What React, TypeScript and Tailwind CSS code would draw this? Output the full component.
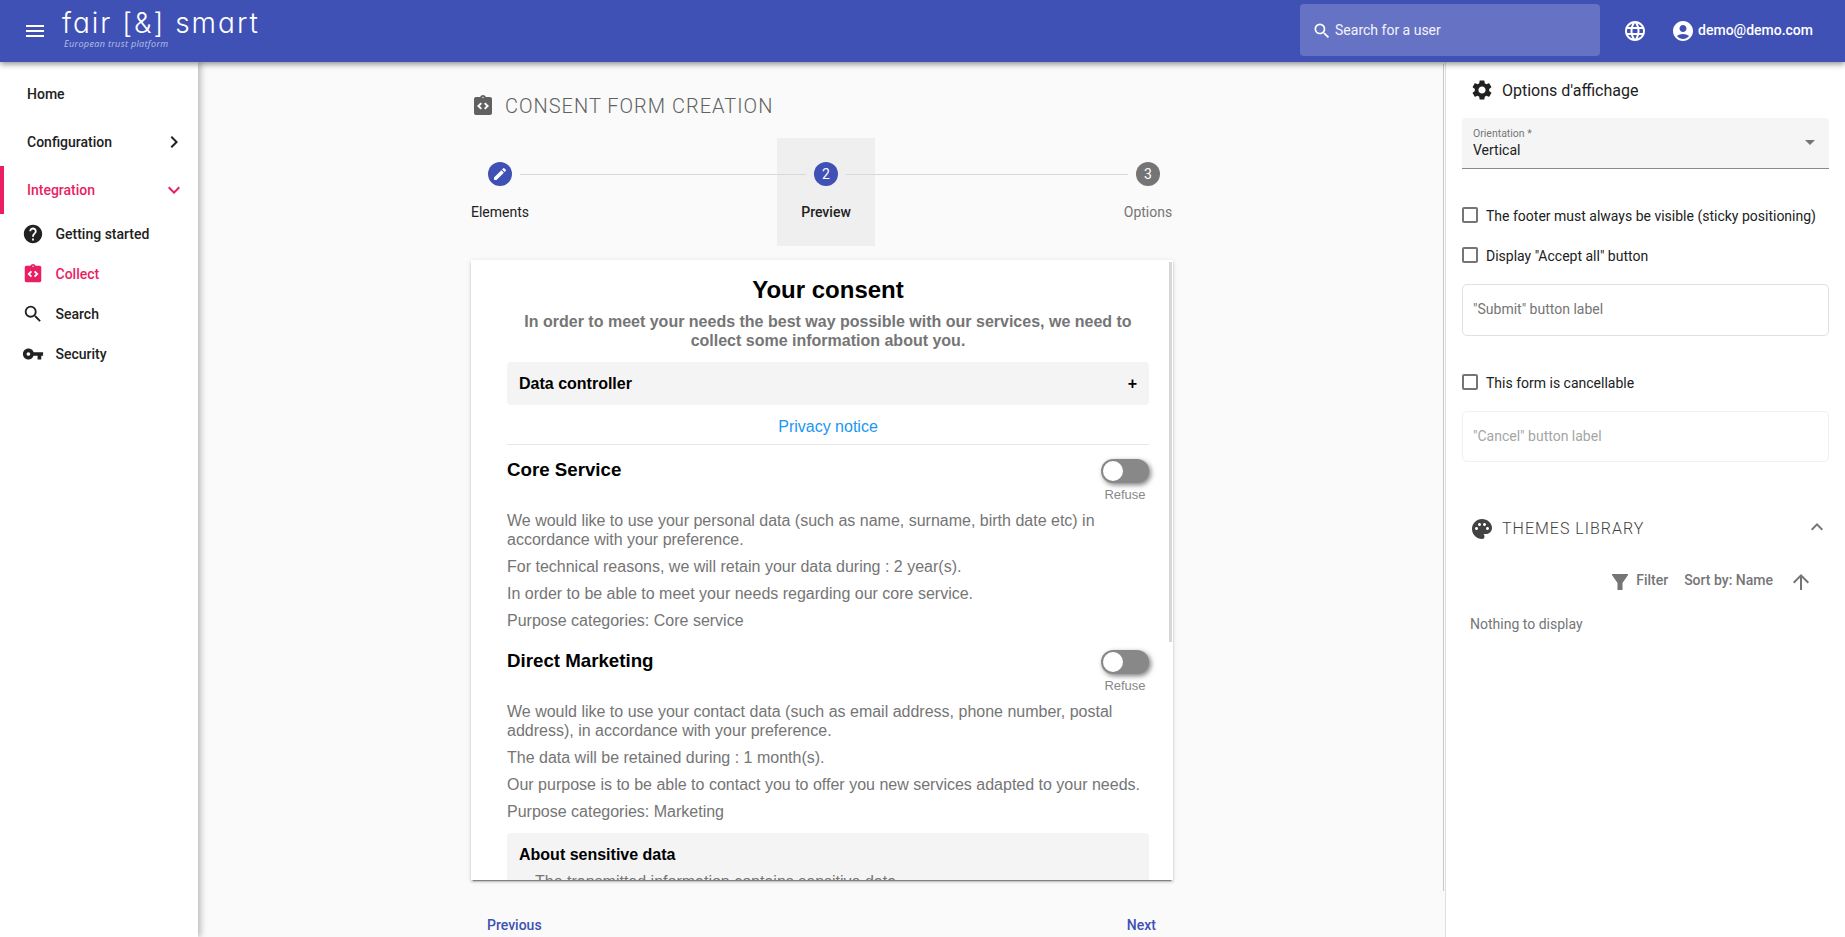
import type { ReactNode } from "react";
import {
  MdMenu, MdHelp, MdIntegrationInstructions, MdSearch, MdVpnKey, MdLanguage, MdAccountCircle,
  MdSettings, MdPalette, MdCreate, MdArrowUpward, MdChevronRight, MdExpandMore, MdExpandLess,
} from "react-icons/md";

function NavItem({ label, active, icon }: { label: string; active?: boolean; icon?: ReactNode }) {
  return (
    <div className={`flex h-12 items-center justify-between border-l-4 pr-3 pl-[23px] ${active ? "border-[#e91e63] text-[#e91e63]" : "border-transparent"}`}>
      <span>{label}</span>
      {icon}
    </div>
  );
}

function SubItem({ label, active, icon }: { label: string; active?: boolean; icon: ReactNode }) {
  return (
    <div className={`flex h-10 items-center pl-[22px] ${active ? "text-[#e91e63]" : ""}`}>
      <span className="w-[33.5px]">{icon}</span>
      <span>{label}</span>
    </div>
  );
}

function Toggle() {
  return (
    <div className="flex w-12 shrink-0 flex-col items-center">
      <div className="flex h-6 w-12 items-center rounded-full bg-[#888] pl-0.5 shadow-[2px_2px_5px_rgba(0,0,0,0.5)]">
        <div className="h-5 w-5 rounded-full bg-white" />
      </div>
      <span className="mt-1 text-[13px] leading-[15px] text-[#888]">Refuse</span>
    </div>
  );
}

function Purpose({ title, lines }: { title: string; lines: string[] }) {
  return (
    <section>
      <div className="flex h-11 items-start justify-between">
        <h3 className="text-[18.72px] leading-[22px] font-bold text-black">{title}</h3>
        <Toggle />
      </div>
      <div className="mt-2 flex flex-col gap-2">
        {lines.map((l) => <p key={l}>{l}</p>)}
      </div>
    </section>
  );
}

function Check({ label }: { label: string }) {
  return (
    <div className="flex h-10 items-center">
      <span className="mr-2 h-4 w-4 rounded-[2px] border-2 border-[#757575]" />
      <span className="pt-px">{label}</span>
    </div>
  );
}

export default function App() {
  return (
    <div className="flex h-[937px] w-[1845px] flex-col overflow-hidden bg-[#fafafa] font-['Roboto',sans-serif] text-sm text-[#212121]">
      <header className="relative z-20 flex h-[62px] shrink-0 items-center bg-[#3f51b5] text-white shadow-[0_2px_6px_rgba(0,0,0,0.45)]">
        <MdMenu className="ml-[23px] h-6 w-6" />
        <div className="ml-[15px] flex h-[62px] w-[210px] flex-col pt-1.5">
          <div className="h-[30px] font-['Inter',sans-serif] text-[28px] leading-[34px] font-light tracking-[2px] whitespace-nowrap [font-feature-settings:'cv11']">fair [&amp;] smart</div>
          <div className="pt-px pl-0.5 font-['Open_Sans',sans-serif] text-[9px] leading-[14px] tracking-[0.35px] italic text-[#b9c0e4]">European trust platform</div>
        </div>
        <div className="mr-[23px] mb-0.5 ml-auto flex h-[52px] w-[300px] items-center rounded bg-[#6673c4] pl-3">
          <MdSearch className="mt-0.5 h-5 w-5" />
          <span className="ml-[3px] text-[#f3f4fb]">Search for a user</span>
        </div>
        <MdLanguage className="h-6 w-6" />
        <MdAccountCircle className="ml-6 h-6 w-6" />
        <span className="mr-8 mb-0.5 ml-[3px] font-medium">demo@demo.com</span>
      </header>

      <div className="flex min-h-0 flex-1">
        <nav className="z-10 w-[198px] shrink-0 bg-white pt-2 font-medium shadow-[3px_0_6px_rgba(0,0,0,0.24)]">
          <NavItem label="Home" />
          <NavItem label="Configuration" icon={<MdChevronRight className="h-6 w-6" />} />
          <NavItem label="Integration" active icon={<MdExpandMore className="h-6 w-6" />} />
          <SubItem label="Getting started" icon={<MdHelp className="h-[22px] w-[22px]" />} />
          <SubItem label="Collect" active icon={<MdIntegrationInstructions className="h-[22px] w-[22px]" />} />
          <SubItem label="Search" icon={<MdSearch className="h-[22px] w-[22px]" />} />
          <SubItem label="Security" icon={<MdVpnKey className="h-[22px] w-[22px]" />} />
        </nav>

        <main className="flex flex-1 justify-center pt-[31px] pl-[3px]">
          <div className="w-[702px]">
            <div className="flex h-[26px] items-center text-[#616161]">
              <MdIntegrationInstructions className="h-6 w-6" />
              <h1 className="ml-2.5 text-xl font-light tracking-[1px]">CONSENT FORM CREATION</h1>
            </div>
            <div className="mt-[19px] flex h-[108px]">
              <div className="flex w-[58px] flex-col items-center pt-6">
                <span className="flex h-6 w-6 items-center justify-center rounded-full bg-[#3f51b5] text-white"><MdCreate className="h-4 w-4" /></span>
                <span className="mt-4 leading-5">Elements</span>
              </div>
              <div className="z-[1] mt-9 -mr-[29px] -ml-[9px] h-px w-[286px] shrink-0 bg-[#d8d8d8]" />
              <div className="flex w-[98px] flex-col items-center bg-[#efefef] pt-6">
                <span className="flex h-6 w-6 items-center justify-center rounded-full bg-[#3f51b5] text-white">2</span>
                <span className="mt-4 leading-5 font-medium">Preview</span>
              </div>
              <div className="z-[1] mt-9 -mr-[5px] -ml-[29px] h-px w-[282px] shrink-0 bg-[#d8d8d8]" />
              <div className="flex w-[50px] flex-col items-center pt-6">
                <span className="flex h-6 w-6 items-center justify-center rounded-full bg-[#757575] text-white">3</span>
                <span className="mt-4 leading-5 text-[#757575]">Options</span>
              </div>
            </div>

            <div className="mt-3.5 flex h-[620px] overflow-hidden bg-white font-['Liberation_Sans',sans-serif] text-base leading-[19px] text-[#757575] shadow-[0_3px_1px_-2px_rgba(0,0,0,0.35),0_2px_2px_0_rgba(0,0,0,0.16),0_1px_5px_0_rgba(0,0,0,0.12)]">
              <div className="ml-9 w-[642px] shrink-0">
                <h2 className="mt-4 text-center text-2xl leading-7 font-bold text-black">Your consent</h2>
                <p className="mt-2 text-center font-bold">In order to meet your needs the best way possible with our services, we need to collect some information about you.</p>
                <div className="mt-3 flex h-[43px] items-center justify-between rounded bg-[#f4f4f4] px-3 font-bold text-black">
                  <span>Data controller</span><span>+</span>
                </div>
                <p className="mt-3 border-b border-[#e8e8e8] pb-2 text-center text-[#2196f3]">Privacy notice</p>
                <div className="mt-[14px]">
                  <Purpose title="Core Service" lines={[
                    "We would like to use your personal data (such as name, surname, birth date etc) in accordance with your preference.",
                    "For technical reasons, we will retain your data during : 2 year(s).",
                    "In order to be able to meet your needs regarding our core service.",
                    "Purpose categories: Core service",
                  ]} />
                </div>
                <div className="mt-5">
                  <Purpose title="Direct Marketing" lines={[
                    "We would like to use your contact data (such as email address, phone number, postal address), in accordance with your preference.",
                    "The data will be retained during : 1 month(s).",
                    "Our purpose is to be able to contact you to offer you new services adapted to your needs.",
                    "Purpose categories: Marketing",
                  ]} />
                </div>
                <div className="mt-3 h-24 rounded bg-[#f4f4f4] px-3 pt-3">
                  <h4 className="font-bold text-black">About sensitive data</h4>
                  <ul className="mt-2 list-disc pl-4"><li>The transmitted information contains sensitive data.</li></ul>
                </div>
              </div>
              <div className="mt-0.5 ml-5 h-[380px] w-[3px] bg-[#d8d8d8]" />
            </div>
            <div className="mt-[27px] flex justify-between pr-[17px] pl-4 font-medium text-[#3f51b5]">
              <span className="leading-9">Previous</span><span className="leading-9">Next</span>
            </div>
          </div>
        </main>

        <div className="w-0.5 shrink-0"><div className="mt-0.5 h-[827px] w-px bg-[#c8c8c8]" /></div>

        <aside className="w-[400px] shrink-0 border-l border-[#e0e0e0] bg-white px-4 pt-4">
          <div className="flex h-6 items-center">
            <MdSettings className="ml-2 h-6 w-6" />
            <h2 className="ml-2 pt-px text-base">Options d'affichage</h2>
          </div>
          <div className="mt-4 flex h-[51px] items-center justify-between rounded-t border-b border-[#8a8a8a] bg-[#f5f5f5] pr-3.5 pl-[11px]">
            <div className="pb-[3px]">
              <div className="text-[10.5px] leading-[17px] text-[#757575]">Orientation *</div>
              <div className="leading-4">Vertical</div>
            </div>
            <span className="mb-0.5 border-x-5 border-t-5 border-x-transparent border-t-[#757575]" />
          </div>
          <div className="mt-[26px]"><Check label="The footer must always be visible (sticky positioning)" /></div>
          <Check label='Display "Accept all" button' />
          <div className="mt-[9px] flex h-[52px] items-center rounded-[5px] border border-[#e0e0e0] pb-0.5 pl-2.5 text-[#757575]">"Submit" button label</div>
          <div className="mt-[26px]"><Check label="This form is cancellable" /></div>
          <div className="mt-[9px] flex h-[51px] items-center rounded-[5px] border border-[#f0f0f0] pb-0.5 pl-2.5 text-[#a5a5a5]">"Cancel" button label</div>
          <div className="mt-[55px] flex h-6 items-center text-[#424242]">
            <MdPalette className="ml-2 h-6 w-6" />
            <h2 className="ml-2 text-base font-light tracking-[1px]">THEMES LIBRARY</h2>
            <MdExpandLess className="-mt-1 ml-auto h-6 w-6 text-[#757575]" />
          </div>
          <div className="mt-[27px] flex h-6 items-center justify-end pr-4 font-medium text-[#757575]">
            <svg className="mt-[3px] h-4 w-4" viewBox="0 0 16 16" fill="currentColor"><path d="M0 0h16v1l-5.500 8v7h-5V9L0 1z" /></svg>
            <span className="ml-2">Filter</span>
            <span className="ml-4">Sort by: Name</span>
            <MdArrowUpward className="mt-1 ml-4 h-6 w-6" />
          </div>
          <p className="mt-[22px] ml-2 text-[#757575]">Nothing to display</p>
        </aside>
      </div>
    </div>
  );
}
